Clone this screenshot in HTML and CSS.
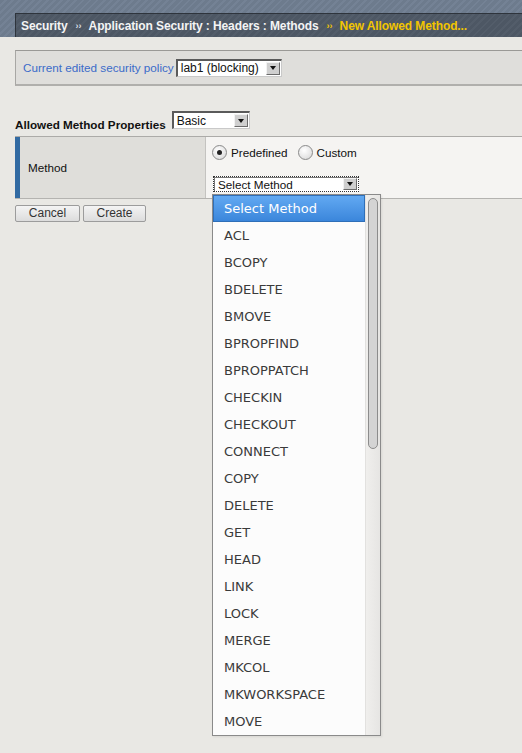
FILE: index.html
```html
<!DOCTYPE html>
<html>
<head>
<meta charset="utf-8">
<link rel="stylesheet" href="styles.css">
</head>
<body>
<div class="header">
  <div class="crumbs">
    <span class="crumb">Security</span>
    <span class="sep">&rsaquo;&rsaquo;</span>
    <span class="crumb">Application Security : Headers : Methods</span>
    <span class="sep sep-cur">&rsaquo;&rsaquo;</span>
    <span class="crumb crumb-cur">New Allowed Method...</span>
  </div>
</div>

<div class="policy">
  <span class="policy-label">Current edited security policy</span>
  <div class="fselect fselect-policy">
    <span class="fselect-text">lab1 (blocking)</span>
    <span class="fselect-arrow"><span class="tri"></span></span>
  </div>
</div>

<div class="props">
  <span class="props-title">Allowed Method Properties</span>
  <div class="fselect fselect-basic">
    <span class="fselect-text">Basic</span>
    <span class="fselect-arrow"><span class="tri"></span></span>
  </div>
</div>

<div class="row">
  <div class="row-label">Method</div>
  <div class="row-value">
    <div class="radios">
      <label class="radio"><span class="radio-dot checked"></span>Predefined</label>
      <label class="radio"><span class="radio-dot"></span>Custom</label>
    </div>
    <div class="fselect fselect-method">
      <span class="fselect-text">Select Method</span>
      <span class="fselect-arrow"><span class="tri"></span></span>
    </div>
  </div>
</div>

<div class="buttons">
  <button class="btn btn-cancel">Cancel</button>
  <button class="btn btn-create">Create</button>
</div>

<div class="popup">
  <ul class="options">
    <li class="opt opt-sel">Select Method</li>
    <li class="opt">ACL</li>
    <li class="opt">BCOPY</li>
    <li class="opt">BDELETE</li>
    <li class="opt">BMOVE</li>
    <li class="opt">BPROPFIND</li>
    <li class="opt">BPROPPATCH</li>
    <li class="opt">CHECKIN</li>
    <li class="opt">CHECKOUT</li>
    <li class="opt">CONNECT</li>
    <li class="opt">COPY</li>
    <li class="opt">DELETE</li>
    <li class="opt">GET</li>
    <li class="opt">HEAD</li>
    <li class="opt">LINK</li>
    <li class="opt">LOCK</li>
    <li class="opt">MERGE</li>
    <li class="opt">MKCOL</li>
    <li class="opt">MKWORKSPACE</li>
    <li class="opt">MOVE</li>
  </ul>
  <div class="scrollbar"><div class="thumb"></div></div>
</div>
</body>
</html>
```

FILE: styles.css
```css
* { box-sizing: border-box; }
html, body {
  margin: 0;
  padding: 0;
  background: #e9e8e4;
  font-family: "Liberation Sans", Arial, sans-serif;
  font-size: 12px;
  color: #222;
  overflow: hidden;
  height: 753px;
  position: relative;
}

/* header */
.header {
  height: 37px;
  padding: 13px 0 0 15px;
  background: repeating-linear-gradient(135deg, #6d7b8d 0px, #6d7b8d 3px, #748295 3px, #748295 5px);
  background-color: #6f7d8f;
}
.crumbs {
  height: 24px;
  display: flex;
  align-items: center;
  padding-left: 5px;
  border-top: 1px solid #2e343c;
  border-left: 1px solid #2e343c;
  background: repeating-linear-gradient(135deg, #4d5764 0px, #4d5764 3px, #535d6a 3px, #535d6a 5px);
  font-weight: bold;
  font-size: 12px;
  color: #f4f4f4;
  white-space: nowrap;
}
.crumb { letter-spacing: -0.1px; }
.sep {
  font-size: 9px;
  color: #d8dce2;
  margin: 0 7px 0 8px;
  letter-spacing: 0;
}
.sep-cur, .crumb-cur { color: #f2c500; }

/* policy box */
.policy {
  margin: 13px 0 0 15px;
  height: 36px;
  display: flex;
  align-items: center;
  padding-left: 7px;
  background: #dfdedb;
  border-top: 1px solid #9a9996;
  border-bottom: 2px solid #b0afac;
  border-left: 1px solid #a8a7a4;
}
.policy-label {
  color: #3b6bc9;
  font-size: 11.7px;
  margin-right: 2px;
}

/* fake selects */
.fselect {
  display: flex;
  align-items: stretch;
  background: #fff;
  border-top: 2px solid #5a5a5a;
  border-left: 2px solid #5a5a5a;
  border-right: 1px solid #c9c9c9;
  border-bottom: 1px solid #c9c9c9;
  font-size: 12px;
  color: #111;
}
.fselect-text {
  flex: 1;
  display: flex;
  align-items: center;
  padding-left: 3px;
  white-space: nowrap;
}
.fselect-arrow {
  width: 14px;
  margin: 1px 1px 1px 0;
  background: #cfcfcf;
  border-top: 1px solid #f2f2f2;
  border-left: 1px solid #f2f2f2;
  border-right: 1px solid #6b6b6b;
  border-bottom: 1px solid #6b6b6b;
  display: flex;
  align-items: center;
  justify-content: center;
}
.tri {
  width: 0;
  height: 0;
  border-left: 3px solid transparent;
  border-right: 3px solid transparent;
  border-top: 4px solid #111;
}
.fselect-policy { width: 106px; height: 18px; }
.fselect-basic { width: 78px; height: 18px; margin-left: 6px; }
.fselect-method {
  width: 146px;
  height: 16px;
  border: 1px dotted #333;
  box-shadow: inset 1px 1px 0 #777;
}
.fselect-method .fselect-text { padding-left: 4px; font-size: 11.7px; }
.fselect-method .fselect-arrow { margin: 1px 1px 1px 0; }

/* properties title */
.props {
  display: flex;
  align-items: center;
  margin: 25px 0 0 15px;
  height: 18px;
}
.props-title {
  font-weight: bold;
  font-size: 11.7px;
  color: #111;
  position: relative;
  top: 4px;
}

/* form row */
.row {
  margin: 7px 0 0 15px;
  display: flex;
  height: 63px;
  border-top: 1px solid #acaba8;
  border-bottom: 1px solid #b4b3b0;
}
.row-label {
  width: 191px;
  background: #dfdeda;
  border-left: 5px solid #326aa2;
  border-right: 1px solid #c4c3c0;
  display: flex;
  align-items: center;
  padding-left: 8px;
  font-size: 11.7px;
  color: #111;
}
.row-value {
  flex: 1;
  background: #f5f4f2;
  padding: 7px 0 0 6px;
  display: flex;
  flex-direction: column;
}
.radios {
  display: flex;
  align-items: center;
  height: 16px;
}
.radio {
  display: flex;
  align-items: center;
  font-size: 11.7px;
  color: #111;
  margin-right: 10px;
}
.radio-dot {
  width: 15px;
  height: 15px;
  border-radius: 50%;
  border: 1px solid #8a8a8a;
  background: radial-gradient(circle at 40% 35%, #ffffff 0%, #e6e6e6 60%, #cfcfcf 100%);
  margin-right: 4px;
  position: relative;
}
.radio-dot.checked::after {
  content: "";
  position: absolute;
  left: 4px;
  top: 4px;
  width: 5px;
  height: 5px;
  border-radius: 50%;
  background: #222;
}
.row-value .fselect-method { margin-top: 16px; margin-left: 1px; }

/* buttons */
.buttons {
  display: flex;
  gap: 3px;
  margin: 6px 0 0 15px;
}
.btn {
  height: 17px;
  padding: 0;
  border: 1px solid #9c9c9c;
  border-radius: 2px;
  background: linear-gradient(#f4f4f4, #dcdcdc);
  font-family: "Liberation Sans", Arial, sans-serif;
  font-size: 12px;
  color: #333;
  line-height: 15px;
}
.btn-cancel { width: 65px; }
.btn-create { width: 63px; }

/* dropdown popup */
.popup {
  position: absolute;
  left: 212px;
  top: 194px;
  width: 169px;
  height: 542px;
  border: 1px solid #8a8a8a;
  background: #fcfcfc;
  display: flex;
  box-shadow: 1px 1px 2px rgba(0,0,0,0.08);
}
.options {
  list-style: none;
  margin: 0;
  padding: 0;
  flex: 1;
}
.opt {
  height: 27px;
  line-height: 27px;
  padding-left: 11px;
  font-family: "DejaVu Sans", sans-serif;
  font-size: 13px;
  color: #3a3a3a;
  white-space: nowrap;
}
.opt-sel {
  background: linear-gradient(#62a9f2, #3b86db);
  border: 1px solid #2f6fb8;
  color: #fff;
  line-height: 25px;
  padding-left: 10px;
}
.scrollbar {
  width: 15px;
  background: linear-gradient(90deg, #f0efed, #e6e5e3);
  border-left: 1px solid #e2e1df;
  padding: 3px 0 0 2px;
}
.thumb {
  width: 10px;
  height: 251px;
  border: 1px solid #8c8c8c;
  border-radius: 5px;
  background: #d4d4d4;
}
```
